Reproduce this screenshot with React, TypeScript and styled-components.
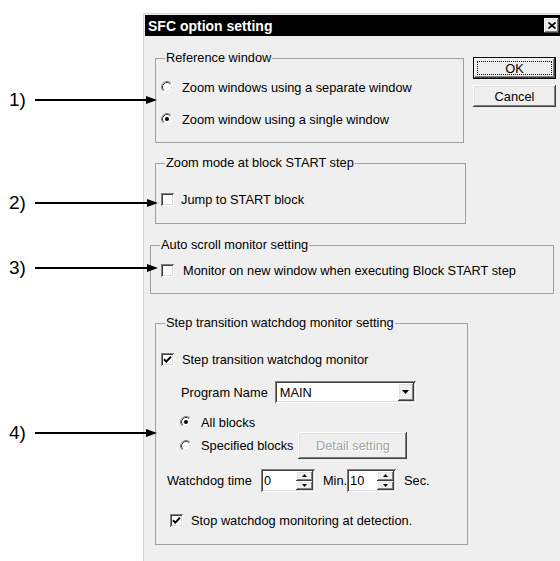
import React from "react";
import styled, { createGlobalStyle, css } from "styled-components";

const GlobalStyle = createGlobalStyle`
  html, body { margin: 0; padding: 0; background: #ffffff; }
  body { font-family: "Liberation Sans", Arial, Helvetica, sans-serif; }
`;

const Page = styled.div`
  position: relative;
  width: 560px;
  height: 561px;
  box-sizing: border-box;
  padding: 13px 0 0 143px;
  overflow: hidden;
  background: #fff;
`;

const Dialog = styled.div`
  width: 421px;
  height: 548px;
  box-sizing: border-box;
  border: 1px solid #d4d4d4;
  border-bottom: none;
  padding: 1px;
  background: #efefef;
  color: #000;
  font-size: 12.8px;
  line-height: 15px;
`;

const TitleBar = styled.div`
  height: 21px;
  display: flex;
  align-items: center;
  justify-content: space-between;
  padding: 0 3px;
  background: #000;
`;

const Title = styled.span`
  color: #fff;
  font-weight: bold;
  font-size: 14px;
  line-height: 16px;
`;

const raised = css`
  background: #efefef;
  box-shadow: inset -1px -1px #404040, inset 1px 1px #ffffff,
    inset -2px -2px #808080, inset 2px 2px #e2e2e2;
`;

const sunken = css`
  box-shadow: inset 1px 1px #808080, inset -1px -1px #ffffff,
    inset 2px 2px #404040, inset -2px -2px #dcdcdc;
`;

const CloseButton = styled.span`
  width: 15px;
  height: 15px;
  box-sizing: border-box;
  display: flex;
  align-items: center;
  justify-content: center;
  ${raised};
`;

const Body = styled.div`
  padding-left: 10px;
  display: flex;
  flex-direction: column;
  align-items: flex-start;
`;

const TopRow = styled.div`
  display: flex;
  align-items: flex-start;
  margin-top: 15px;
`;

const Group = styled.fieldset<{ $w: number; $pt: number; $pb: number; $mt?: number; $ml?: number }>`
  box-sizing: border-box;
  width: ${(p) => p.$w}px;
  min-width: 0;
  margin: ${(p) => p.$mt ?? 0}px 0 0 ${(p) => p.$ml ?? 0}px;
  padding: ${(p) => p.$pt}px 4px ${(p) => p.$pb}px 5px;
  border: 1px solid #a0a0a0;
`;

const Legend = styled.legend`
  padding: 0 1px;
  margin-left: 4px;
  font-size: 12.8px;
  line-height: 14px;
`;

const Stack = styled.div`
  display: flex;
  flex-direction: column;
  align-items: flex-start;
`;

const Row = styled.div<{ $ml?: number; $mt?: number; $h?: number; $gap?: number }>`
  display: flex;
  align-items: center;
  height: ${(p) => p.$h ?? 20}px;
  margin: ${(p) => p.$mt ?? 0}px 0 0 ${(p) => p.$ml ?? 0}px;
  gap: ${(p) => p.$gap ?? 0}px;
  white-space: nowrap;
`;

const Label = styled.span<{ $ml?: number }>`
  margin-left: ${(p) => p.$ml ?? 0}px;
`;

const CheckBox = styled.span`
  flex: none;
  width: 13px;
  height: 13px;
  box-sizing: border-box;
  background: #fff;
  display: flex;
  align-items: center;
  justify-content: center;
  ${sunken};
`;

const RadioSvg = styled.svg`
  flex: none;
  display: block;
`;

const ButtonColumn = styled.div`
  display: flex;
  flex-direction: column;
  gap: 6px;
  margin: 6px 0 0 9px;
`;

const PushButton = styled.div<{ $w: number; $h: number; $default?: boolean; $disabled?: boolean; $ml?: number }>`
  box-sizing: border-box;
  width: ${(p) => p.$w}px;
  height: ${(p) => p.$h}px;
  margin-left: ${(p) => p.$ml ?? 0}px;
  display: flex;
  align-items: center;
  justify-content: center;
  ${raised};
  color: ${(p) => (p.$disabled ? "#a3a3a3" : "#000")};
  text-shadow: ${(p) => (p.$disabled ? "1px 1px 0 #ffffff" : "none")};
  ${(p) =>
    p.$default &&
    css`
      border: 1px solid #000;
      padding: 3px;
      box-shadow: inset -1px -1px #404040, inset 1px 1px #ffffff, inset -2px -2px #808080;
    `}
`;

const FocusRing = styled.span`
  flex: 1;
  align-self: stretch;
  display: flex;
  align-items: center;
  justify-content: center;
  border: 1px dotted #000;
`;

const Combo = styled.div<{ $w: number; $ml: number }>`
  box-sizing: border-box;
  width: ${(p) => p.$w}px;
  height: 22px;
  margin-left: ${(p) => p.$ml}px;
  padding: 2px;
  display: flex;
  align-items: stretch;
  background: #fff;
  ${sunken};
`;

const ComboText = styled.span`
  flex: 1;
  display: flex;
  align-items: center;
  padding-left: 3px;
`;

const DropButton = styled.span`
  width: 16px;
  display: flex;
  align-items: center;
  justify-content: center;
  ${raised};
`;

const SpinBox = styled.div<{ $ml: number }>`
  box-sizing: border-box;
  height: 23px;
  margin-left: ${(p) => p.$ml}px;
  padding: 2px;
  display: flex;
  align-items: stretch;
  background: #fff;
  ${sunken};
`;

const SpinField = styled.span<{ $w: number }>`
  width: ${(p) => p.$w}px;
  display: flex;
  align-items: center;
  padding-left: 1px;
  background: #fff;
`;

const SpinButtons = styled.span`
  width: 17px;
  display: flex;
  flex-direction: column;
`;

const SpinButton = styled.span`
  flex: 1;
  display: flex;
  align-items: center;
  justify-content: center;
  ${raised};
`;

const Callout = styled.div`
  position: absolute;
  left: 9px;
  height: 24px;
  display: flex;
  align-items: center;
  gap: 9px;
  font-size: 19px;
  line-height: 24px;
  color: #000;
`;

const Check = ({ checked }: { checked?: boolean }) => (
  <CheckBox>
    {checked && (
      <svg width="9" height="9" viewBox="0 0 9 9">
        <path d="M1 4.2 L3.3 6.6 L8 1.6" fill="none" stroke="#000" strokeWidth="2" />
      </svg>
    )}
  </CheckBox>
);

const Radio = ({ checked }: { checked?: boolean }) => (
  <RadioSvg width="12" height="12" viewBox="0 0 12 12">
    <circle cx="6" cy="6" r="5" fill="#fff" />
    <path d="M2.11 9.89 A5.5 5.5 0 0 1 9.89 2.11" fill="none" stroke="#808080" />
    <path d="M9.89 2.11 A5.5 5.5 0 0 1 2.11 9.89" fill="none" stroke="#ffffff" />
    <path d="M2.82 9.18 A4.5 4.5 0 0 1 9.18 2.82" fill="none" stroke="#404040" />
    <path d="M9.18 2.82 A4.5 4.5 0 0 1 2.82 9.18" fill="none" stroke="#dcdcdc" />
    {checked && <circle cx="6" cy="6" r="2" fill="#000" />}
  </RadioSvg>
);

const DownTriangle = ({ w = 7, h = 4 }: { w?: number; h?: number }) => (
  <svg width={w} height={h} viewBox={`0 0 ${w} ${h}`}>
    <polygon points={`0,0 ${w},0 ${w / 2},${h}`} fill="#000" />
  </svg>
);

const UpTriangle = ({ w = 5, h = 3 }: { w?: number; h?: number }) => (
  <svg width={w} height={h} viewBox={`0 0 ${w} ${h}`}>
    <polygon points={`0,${h} ${w},${h} ${w / 2},0`} fill="#000" />
  </svg>
);

const Arrow = ({ width }: { width: number }) => (
  <svg width={width} height="10" viewBox={`0 0 ${width} 10`}>
    <line x1="0" y1="5" x2={width - 9} y2="5" stroke="#000" strokeWidth="2" />
    <polygon points={`${width - 11},1 ${width},5 ${width - 11},9`} fill="#000" />
  </svg>
);

const Spin = ({ value, fieldW, ml }: { value: string; fieldW: number; ml: number }) => (
  <SpinBox $ml={ml}>
    <SpinField $w={fieldW}>{value}</SpinField>
    <SpinButtons>
      <SpinButton>
        <UpTriangle />
      </SpinButton>
      <SpinButton>
        <DownTriangle w={5} h={3} />
      </SpinButton>
    </SpinButtons>
  </SpinBox>
);

const callouts = [
  { label: "1)", y: 100, tip: 157 },
  { label: "2)", y: 203, tip: 158 },
  { label: "3)", y: 268, tip: 158 },
  { label: "4)", y: 433, tip: 157 },
];

export default function App() {
  return (
    <>
      <GlobalStyle />
      <Page>
        <Dialog>
          <TitleBar>
            <Title>SFC option setting</Title>
            <CloseButton>
              <svg width="8" height="7" viewBox="0 0 8 7">
                <path d="M0.5 0.5 L7.5 6.5 M7.5 0.5 L0.5 6.5" stroke="#000" strokeWidth="1.7" />
              </svg>
            </CloseButton>
          </TitleBar>
          <Body>
            <TopRow>
              <Group $w={309} $pt={12} $pb={13}>
                <Legend>Reference window</Legend>
                <Stack>
                  <Row $gap={9}>
                    <Radio />
                    <Label>Zoom windows using a separate window</Label>
                  </Row>
                  <Row $gap={9} $mt={12}>
                    <Radio checked />
                    <Label>Zoom window using a single window</Label>
                  </Row>
                </Stack>
              </Group>
              <ButtonColumn>
                <PushButton $w={83} $h={22} $default>
                  <FocusRing>OK</FocusRing>
                </PushButton>
                <PushButton $w={83} $h={22}>
                  Cancel
                </PushButton>
              </ButtonColumn>
            </TopRow>

            <Group $w={311} $pt={19} $pb={14} $mt={13}>
              <Legend>Zoom mode at block START step</Legend>
              <Stack>
                <Row $gap={7}>
                  <Check />
                  <Label>Jump to START block</Label>
                </Row>
              </Stack>
            </Group>

            <Group $w={404} $pt={8} $pb={13} $mt={14} $ml={-5}>
              <Legend>Auto scroll monitor setting</Legend>
              <Stack>
                <Row $gap={9} $ml={5}>
                  <Check />
                  <Label>Monitor on new window when executing Block START step</Label>
                </Row>
              </Stack>
            </Group>

            <Group $w={313} $pt={19} $pb={14} $mt={22}>
              <Legend>Step transition watchdog monitor setting</Legend>
              <Stack>
                <Row $gap={8}>
                  <Check checked />
                  <Label>Step transition watchdog monitor</Label>
                </Row>
                <Row $h={22} $mt={12} $ml={20}>
                  <Label>Program Name</Label>
                  <Combo $w={141} $ml={7}>
                    <ComboText>MAIN</ComboText>
                    <DropButton>
                      <DownTriangle />
                    </DropButton>
                  </Combo>
                </Row>
                <Row $mt={9} $ml={19} $gap={9}>
                  <Radio checked />
                  <Label>All blocks</Label>
                </Row>
                <Row $h={27} $ml={19} $gap={9}>
                  <Radio />
                  <Label>Specified blocks</Label>
                  <PushButton $w={109} $h={27} $disabled $ml={-4}>
                    Detail setting
                  </PushButton>
                </Row>
                <Row $h={23} $mt={10} $ml={6}>
                  <Label>Watchdog time</Label>
                  <Spin value="0" fieldW={32} ml={9} />
                  <Label $ml={8}>Min.</Label>
                  <Spin value="10" fieldW={27} ml={0} />
                  <Label $ml={8}>Sec.</Label>
                </Row>
                <Row $mt={18} $ml={9} $gap={8}>
                  <Check checked />
                  <Label>Stop watchdog monitoring at detection.</Label>
                </Row>
              </Stack>
            </Group>
          </Body>
        </Dialog>

        {callouts.map((c) => (
          <Callout key={c.label} style={{ top: c.y - 12 }}>
            <span>{c.label}</span>
            <Arrow width={c.tip - 35} />
          </Callout>
        ))}
      </Page>
    </>
  );
}
